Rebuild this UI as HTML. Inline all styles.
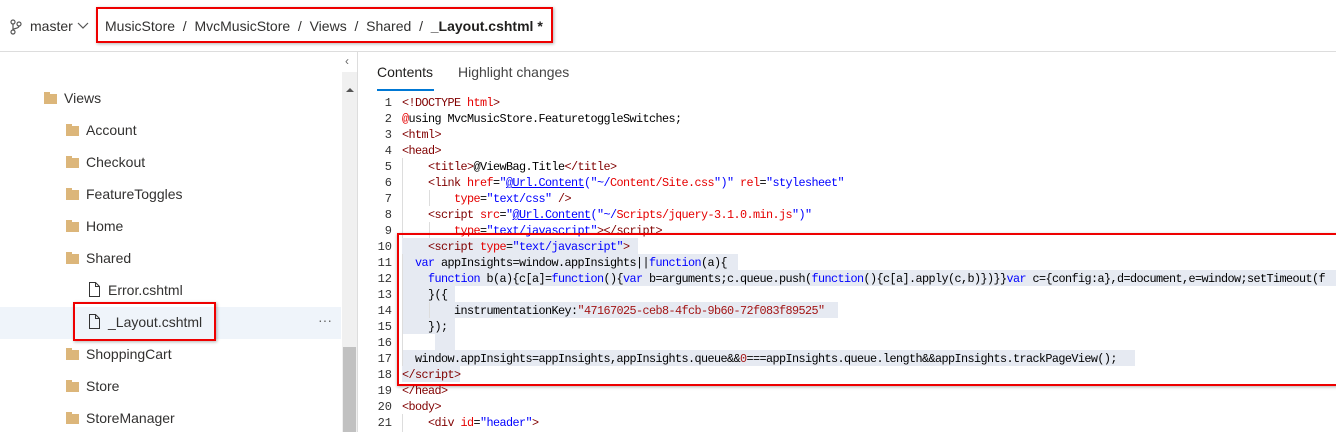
<!DOCTYPE html>
<html><head><style>
body{margin:0;width:1336px;height:432px;overflow:hidden;background:#fff;font-family:"Liberation Sans",sans-serif;position:relative;color:#323130}
.a{position:absolute;white-space:pre}
.t{font-size:14px;color:#323130}
.code{font-family:"Liberation Mono",monospace;font-size:11.8px;letter-spacing:-0.58px;color:#000}
.ln{position:absolute;left:364px;width:28px;text-align:right;font-family:"Liberation Mono",monospace;font-size:12px;color:#333}
.hl{position:absolute;background:#e6eaf2;height:16px}
.r{color:#a31515}.tg{color:#800000}.at{color:#e50000}.s{color:#0000ff}.k{color:#0000ff}
.fold{position:absolute;width:13px;height:10px;background:#dcb67a}
.fold:before{content:"";position:absolute;left:0;top:-2px;width:6px;height:3px;background:#dcb67a}
.g{position:absolute;width:1px;background:#ddd}
</style></head><body>
<svg class="a" style="left:10px;top:19px" width="12" height="16" viewBox="0 0 12 16"><circle cx="3" cy="3" r="2" fill="none" stroke="#555" stroke-width="1.2"/><circle cx="9" cy="5" r="2" fill="none" stroke="#555" stroke-width="1.2"/><circle cx="3" cy="13" r="2" fill="none" stroke="#555" stroke-width="1.2"/><path d="M3 5v6M9 7c0 3-6 2-6 4" fill="none" stroke="#555" stroke-width="1.2"/></svg>
<div class="a t" style="left:30px;top:18px">master</div>
<svg class="a" style="left:77px;top:22px" width="12" height="8"><path d="M1 1l5 5 5-5" fill="none" stroke="#555" stroke-width="1.2"/></svg>
<div class="a" style="left:96px;top:7px;width:453px;height:32px;border:2px solid #e00;box-shadow:1px 1px 3px rgba(0,0,0,.3)"></div>
<div class="a t" style="left:105px;top:18px">MusicStore&nbsp;&nbsp;/&nbsp;&nbsp;MvcMusicStore&nbsp;&nbsp;/&nbsp;&nbsp;Views&nbsp;&nbsp;/&nbsp;&nbsp;Shared&nbsp;&nbsp;/&nbsp;&nbsp;<b style="color:#201f1e">_Layout.cshtml *</b></div>
<div class="a" style="left:0;top:51px;width:1336px;height:1px;background:#ddd"></div>
<div class="a" style="left:0;top:307px;width:341px;height:32px;background:#eff4fa"></div>
<div class="fold" style="left:44px;top:94px"></div><div class="a t" style="left:64px;top:90px">Views</div>
<div class="fold" style="left:66px;top:126px"></div><div class="a t" style="left:86px;top:122px">Account</div>
<div class="fold" style="left:66px;top:158px"></div><div class="a t" style="left:86px;top:154px">Checkout</div>
<div class="fold" style="left:66px;top:190px"></div><div class="a t" style="left:86px;top:186px">FeatureToggles</div>
<div class="fold" style="left:66px;top:222px"></div><div class="a t" style="left:86px;top:218px">Home</div>
<div class="fold" style="left:66px;top:254px"></div><div class="a t" style="left:86px;top:250px">Shared</div>
<svg class="a" style="left:89px;top:282px" width="11" height="15"><path d="M.5 .5h6l4 4v10h-10z M6.5 .5v4h4" fill="none" stroke="#333"/></svg><div class="a t" style="left:108px;top:282px">Error.cshtml</div>
<div class="a" style="left:73px;top:302px;width:139px;height:35px;border:2px solid #e00;box-shadow:1px 1px 3px rgba(0,0,0,.3)"></div>
<svg class="a" style="left:89px;top:314px" width="11" height="15"><path d="M.5 .5h6l4 4v10h-10z M6.5 .5v4h4" fill="none" stroke="#333"/></svg><div class="a t" style="left:108px;top:314px">_Layout.cshtml</div>
<div class="a" style="left:318px;top:312px;font-size:14px;color:#666">···</div>
<div class="fold" style="left:66px;top:350px"></div><div class="a t" style="left:86px;top:346px">ShoppingCart</div>
<div class="fold" style="left:66px;top:382px"></div><div class="a t" style="left:86px;top:378px">Store</div>
<div class="fold" style="left:66px;top:414px"></div><div class="a t" style="left:86px;top:410px">StoreManager</div>
<div class="a" style="left:342px;top:72px;width:15px;height:360px;background:#f0f0f0"></div>
<div class="a" style="left:343px;top:347px;width:13px;height:85px;background:#c1c1c1"></div>
<svg class="a" style="left:346px;top:87px" width="8" height="6"><path d="M0 5l4-4 4 4z" fill="#555"/></svg>
<div class="a" style="left:345px;top:54px;font-size:12px;color:#666">‹</div>
<div class="a" style="left:357px;top:52px;width:1px;height:380px;background:#ddd"></div>
<div class="a" style="left:377px;top:64px;font-size:14px;color:#201f1e">Contents</div>
<div class="a" style="left:377px;top:89px;width:57px;height:2px;background:#0078d4"></div>
<div class="a" style="left:458px;top:64px;font-size:14px;color:#444">Highlight changes</div>
<div class="hl" style="left:402px;top:238px;width:236px"></div>
<div class="hl" style="left:402px;top:254px;width:336px"></div>
<div class="hl" style="left:402px;top:270px;width:934px"></div>
<div class="hl" style="left:402px;top:286px;width:53px"></div>
<div class="hl" style="left:402px;top:302px;width:436px"></div>
<div class="hl" style="left:402px;top:318px;width:53px"></div>
<div class="hl" style="left:435px;top:334px;width:20px"></div>
<div class="hl" style="left:402px;top:350px;width:733px"></div>
<div class="hl" style="left:402px;top:366px;width:58px"></div>
<div class="g" style="left:402px;top:158px;height:80px"></div>
<div class="g" style="left:429px;top:190px;height:16px"></div>
<div class="g" style="left:429px;top:222px;height:16px"></div>
<div class="g" style="left:402px;top:254px;height:112px"></div>
<div class="g" style="left:429px;top:302px;height:16px"></div>
<div class="g" style="left:402px;top:414px;height:18px"></div>
<div class="ln" style="top:95px;line-height:16px">1<br>2<br>3<br>4<br>5<br>6<br>7<br>8<br>9<br>10<br>11<br>12<br>13<br>14<br>15<br>16<br>17<br>18<br>19<br>20<br>21</div>
<div class="a code" style="left:402px;top:95px;line-height:16px"><span class="tg">&lt;!DOCTYPE</span> <span class="at">html</span><span class="tg">&gt;</span>
<span class="at">@</span>using MvcMusicStore.FeaturetoggleSwitches;
<span class="tg">&lt;html&gt;</span>
<span class="tg">&lt;head&gt;</span>
    <span class="tg">&lt;title&gt;</span>@ViewBag.Title<span class="tg">&lt;/title&gt;</span>
    <span class="tg">&lt;link</span> <span class="at">href</span>=<span class="s">"<u>@Url.Content</u>(</span><span class="s">"~/<span class="at">Content/Site.css</span>")"</span> <span class="at">rel</span>=<span class="s">"stylesheet"</span>
        <span class="at">type</span>=<span class="s">"text/css"</span> <span class="tg">/&gt;</span>
    <span class="tg">&lt;script</span> <span class="at">src</span>=<span class="s">"<u>@Url.Content</u>("~/<span class="at">Scripts/jquery-3.1.0.min.js</span>")"</span>
        <span class="at">type</span>=<span class="s">"text/javascript"</span><span class="tg">&gt;&lt;/script&gt;</span>
    <span class="tg">&lt;script</span> <span class="at">type</span>=<span class="s">"text/javascript"</span><span class="tg">&gt;</span>
  <span class="k">var</span> appInsights=window.appInsights||<span class="k">function</span>(a){
    <span class="k">function</span> b(a){c[a]=<span class="k">function</span>(){<span class="k">var</span> b=arguments;c.queue.push(<span class="k">function</span>(){c[a].apply(c,b)})}}<span class="k">var</span> c={config:a},d=document,e=window;setTimeout(f
    }({
        instrumentationKey:<span class="r">"47167025-ceb8-4fcb-9b60-72f083f89525"</span>
    });

  window.appInsights=appInsights,appInsights.queue&amp;&amp;<span class="r">0</span>===appInsights.queue.length&amp;&amp;appInsights.trackPageView();
<span class="tg">&lt;/script&gt;</span>
<span class="tg">&lt;/head&gt;</span>
<span class="tg">&lt;body&gt;</span>
    <span class="tg">&lt;div</span> <span class="at">id</span>=<span class="s">"header"</span><span class="tg">&gt;</span></div>
<div class="a" style="left:397px;top:233px;width:945px;height:149px;border:2px solid #e00;box-shadow:0 1px 3px rgba(0,0,0,.3)"></div>
</body></html>
